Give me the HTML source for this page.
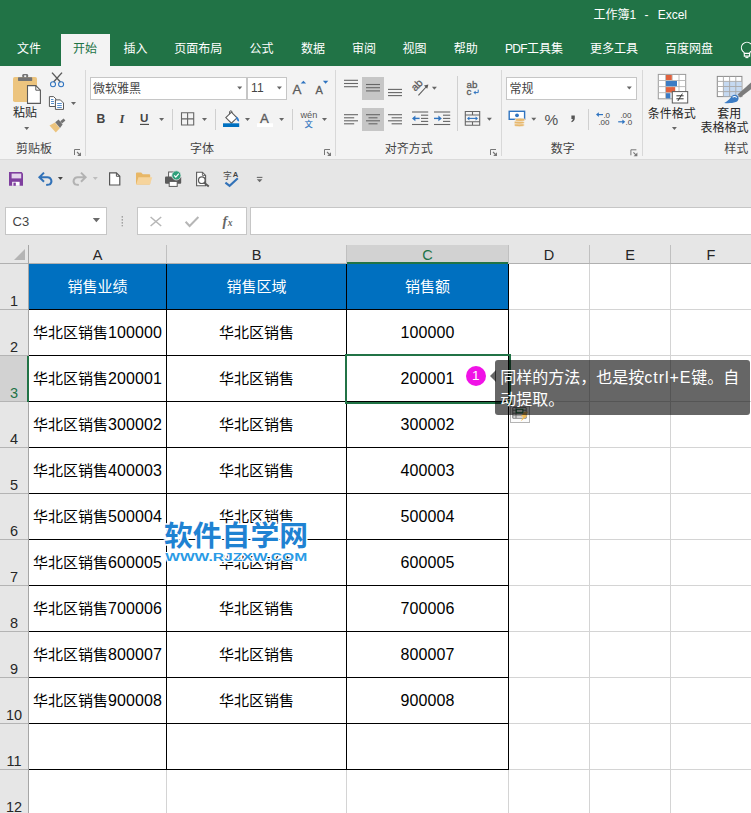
<!DOCTYPE html>
<html lang="zh-CN"><head><meta charset="utf-8"><title>Excel</title>
<style>
html,body{margin:0;padding:0}
body{width:751px;height:813px;overflow:hidden;position:relative;background:#fff;font-family:"Liberation Sans","Noto Sans CJK SC",sans-serif;color:#262626}
.b{position:absolute;box-sizing:border-box}
.t{position:absolute;white-space:nowrap}
.ic{position:absolute;overflow:visible}
.d{letter-spacing:.1px;font-size:16px}
.e{letter-spacing:.95px}

</style></head><body>
<div class="b " style="left:0px;top:0px;width:751px;height:66px;background:#217346;"></div>
<div class="b " style="left:61px;top:34px;width:49px;height:32px;background:#f3f3f3;"></div>
<div class="t w" style="left:593.4px;top:5.84px;font-size:12px;line-height:19px;color:#fff;">工作簿1</div>
<div class="t " style="left:644.5px;top:5.84px;font-size:12px;line-height:19px;color:#fff;">-</div>
<div class="t " style="left:657.7px;top:5.84px;font-size:12px;line-height:19px;color:#fff;">Excel</div>
<div class="t w" style="left:17px;top:40.04px;font-size:12px;line-height:19px;color:#fff;">文件</div>
<div class="t w" style="left:73px;top:40.04px;font-size:12px;line-height:19px;color:#217346;">开始</div>
<div class="t w" style="left:123.5px;top:40.04px;font-size:12px;line-height:19px;color:#fff;">插入</div>
<div class="t w" style="left:174.2px;top:40.04px;font-size:12px;line-height:19px;color:#fff;">页面布局</div>
<div class="t w" style="left:249.5px;top:40.04px;font-size:12px;line-height:19px;color:#fff;">公式</div>
<div class="t w" style="left:301px;top:40.04px;font-size:12px;line-height:19px;color:#fff;">数据</div>
<div class="t w" style="left:352px;top:40.04px;font-size:12px;line-height:19px;color:#fff;">审阅</div>
<div class="t w" style="left:402.5px;top:40.04px;font-size:12px;line-height:19px;color:#fff;">视图</div>
<div class="t w" style="left:453.7px;top:40.04px;font-size:12px;line-height:19px;color:#fff;">帮助</div>
<div class="t w" style="left:505px;top:40.04px;font-size:12px;line-height:19px;color:#fff;"><span style="letter-spacing:-.7px">PDF</span>工具集</div>
<div class="t w" style="left:590px;top:40.04px;font-size:12px;line-height:19px;color:#fff;">更多工具</div>
<div class="t w" style="left:665px;top:40.04px;font-size:12px;line-height:19px;color:#fff;">百度网盘</div>
<div class="b " style="left:0px;top:66px;width:751px;height:94px;background:#f3f3f3;"></div>
<div class="b " style="left:0px;top:159px;width:751px;height:1px;background:#dadada;"></div>
<div class="b " style="left:85px;top:70px;width:1px;height:86px;background:#d8d8d8;"></div>
<div class="b " style="left:335px;top:70px;width:1px;height:86px;background:#d8d8d8;"></div>
<div class="b " style="left:501px;top:70px;width:1px;height:86px;background:#d8d8d8;"></div>
<div class="b " style="left:642px;top:70px;width:1px;height:86px;background:#d8d8d8;"></div>
<div class="b " style="left:172px;top:109px;width:1px;height:21px;background:#d0d0d0;"></div>
<div class="b " style="left:215px;top:109px;width:1px;height:21px;background:#d0d0d0;"></div>
<div class="b " style="left:292px;top:109px;width:1px;height:21px;background:#d0d0d0;"></div>
<div class="b " style="left:588px;top:109px;width:1px;height:21px;background:#d0d0d0;"></div>
<div class="b " style="left:457px;top:76px;width:1px;height:55px;background:#d0d0d0;"></div>
<div class="t " style="left:16px;top:140.44px;font-size:12px;line-height:19px;color:#444;">剪贴板</div>
<div class="t " style="left:190px;top:140.44px;font-size:12px;line-height:19px;color:#444;">字体</div>
<div class="t " style="left:384.8px;top:140.44px;font-size:12px;line-height:19px;color:#444;">对齐方式</div>
<div class="t " style="left:550.8px;top:140.44px;font-size:12px;line-height:19px;color:#444;">数字</div>
<div class="t " style="left:724.2px;top:140.44px;font-size:12px;line-height:19px;color:#444;">样式</div>
<div class="t " style="left:13px;top:104.44px;font-size:12px;line-height:19px;color:#262626;">粘贴</div>
<div class="b " style="left:90px;top:77px;width:157px;height:23px;background:#fff;border:1px solid #c6c6c6"></div>
<div class="b " style="left:247px;top:77px;width:40px;height:23px;background:#fff;border:1px solid #c6c6c6"></div>
<div class="t " style="left:93px;top:79.54px;font-size:12px;line-height:19px;color:#444;">微软雅黑</div>
<div class="t " style="left:251px;top:79.34px;font-size:12px;line-height:19px;color:#444;letter-spacing:.3px">11</div>
<div class="b " style="left:506px;top:77px;width:131px;height:23px;background:#fff;border:1px solid #c6c6c6"></div>
<div class="t " style="left:509.4px;top:79.54px;font-size:12px;line-height:19px;color:#444;">常规</div>
<div class="t " style="left:647.8px;top:104.64px;font-size:12px;line-height:19px;color:#262626;">条件格式</div>
<div class="t " style="left:717.3px;top:104.64px;font-size:12px;line-height:19px;color:#262626;">套用</div>
<div class="t " style="left:700.5px;top:118.94px;font-size:12px;line-height:19px;color:#262626;">表格格式</div>
<div class="b " style="left:362px;top:77px;width:22px;height:23px;background:#c6c6c6;"></div>
<div class="b " style="left:362px;top:108px;width:22px;height:23px;background:#c6c6c6;"></div>
<div class="b " style="left:0px;top:160px;width:751px;height:104px;background:#e6e6e6;"></div>
<div class="b " style="left:5px;top:207px;width:102px;height:28px;background:#fff;border:1px solid #c6c6c6"></div>
<div class="t " style="left:12.5px;top:211.20px;font-size:13px;line-height:21px;color:#444;">C3</div>
<div class="b " style="left:137px;top:207px;width:110px;height:28px;background:#fff;border:1px solid #c6c6c6"></div>
<div class="b " style="left:250px;top:207px;width:510px;height:28px;background:#fff;border:1px solid #c6c6c6"></div>
<div class="b " style="left:0px;top:264px;width:751px;height:560px;background:#fff;"></div>
<div class="b " style="left:0px;top:264px;width:28px;height:560px;background:#e6e6e6;"></div>
<div class="b " style="left:347px;top:245px;width:161px;height:17px;background:#d2d2d2;"></div>
<div class="b " style="left:346px;top:262px;width:163px;height:2px;background:#217346;"></div>
<div class="b " style="left:28px;top:245px;width:1px;height:19px;background:#c0c0c0;"></div>
<div class="b " style="left:166px;top:245px;width:1px;height:19px;background:#c0c0c0;"></div>
<div class="b " style="left:346px;top:245px;width:1px;height:19px;background:#c0c0c0;"></div>
<div class="b " style="left:508px;top:245px;width:1px;height:19px;background:#c0c0c0;"></div>
<div class="b " style="left:589px;top:245px;width:1px;height:19px;background:#c0c0c0;"></div>
<div class="b " style="left:670px;top:245px;width:1px;height:19px;background:#c0c0c0;"></div>
<div class="b " style="left:0px;top:263px;width:346px;height:1px;background:#b0b0b0;"></div>
<div class="b " style="left:509px;top:263px;width:242px;height:1px;background:#b0b0b0;"></div>
<div class="t " style="left:-2.5px;width:200px;text-align:center;top:244.08px;font-size:14.5px;line-height:23px;color:#262626;">A</div>
<div class="t " style="left:156.5px;width:200px;text-align:center;top:244.08px;font-size:14.5px;line-height:23px;color:#262626;">B</div>
<div class="t " style="left:327.5px;width:200px;text-align:center;top:244.08px;font-size:14.5px;line-height:23px;color:#217346;">C</div>
<div class="t " style="left:449px;width:200px;text-align:center;top:244.08px;font-size:14.5px;line-height:23px;color:#262626;">D</div>
<div class="t " style="left:530px;width:200px;text-align:center;top:244.08px;font-size:14.5px;line-height:23px;color:#262626;">E</div>
<div class="t " style="left:611px;width:200px;text-align:center;top:244.08px;font-size:14.5px;line-height:23px;color:#262626;">F</div>
<svg class="ic" style="left:14px;top:249px" width="11" height="11" viewBox="0 0 11 11"><path d="M11 0V11H0Z" fill="#b4b4b4"/></svg>
<div class="b " style="left:0px;top:309px;width:28px;height:1px;background:#b4b4b4;"></div>
<div class="b " style="left:29px;top:309px;width:722px;height:1px;background:#d4d4d4;"></div>
<div class="b " style="left:0px;top:355px;width:28px;height:1px;background:#b4b4b4;"></div>
<div class="b " style="left:29px;top:355px;width:722px;height:1px;background:#d4d4d4;"></div>
<div class="b " style="left:0px;top:401px;width:28px;height:1px;background:#b4b4b4;"></div>
<div class="b " style="left:29px;top:401px;width:722px;height:1px;background:#d4d4d4;"></div>
<div class="b " style="left:0px;top:447px;width:28px;height:1px;background:#b4b4b4;"></div>
<div class="b " style="left:29px;top:447px;width:722px;height:1px;background:#d4d4d4;"></div>
<div class="b " style="left:0px;top:493px;width:28px;height:1px;background:#b4b4b4;"></div>
<div class="b " style="left:29px;top:493px;width:722px;height:1px;background:#d4d4d4;"></div>
<div class="b " style="left:0px;top:539px;width:28px;height:1px;background:#b4b4b4;"></div>
<div class="b " style="left:29px;top:539px;width:722px;height:1px;background:#d4d4d4;"></div>
<div class="b " style="left:0px;top:585px;width:28px;height:1px;background:#b4b4b4;"></div>
<div class="b " style="left:29px;top:585px;width:722px;height:1px;background:#d4d4d4;"></div>
<div class="b " style="left:0px;top:631px;width:28px;height:1px;background:#b4b4b4;"></div>
<div class="b " style="left:29px;top:631px;width:722px;height:1px;background:#d4d4d4;"></div>
<div class="b " style="left:0px;top:677px;width:28px;height:1px;background:#b4b4b4;"></div>
<div class="b " style="left:29px;top:677px;width:722px;height:1px;background:#d4d4d4;"></div>
<div class="b " style="left:0px;top:723px;width:28px;height:1px;background:#b4b4b4;"></div>
<div class="b " style="left:29px;top:723px;width:722px;height:1px;background:#d4d4d4;"></div>
<div class="b " style="left:0px;top:769px;width:28px;height:1px;background:#b4b4b4;"></div>
<div class="b " style="left:29px;top:769px;width:722px;height:1px;background:#d4d4d4;"></div>
<div class="b " style="left:0px;top:815px;width:28px;height:1px;background:#b4b4b4;"></div>
<div class="b " style="left:29px;top:815px;width:722px;height:1px;background:#d4d4d4;"></div>
<div class="b " style="left:166px;top:264px;width:1px;height:560px;background:#d4d4d4;"></div>
<div class="b " style="left:346px;top:264px;width:1px;height:560px;background:#d4d4d4;"></div>
<div class="b " style="left:508px;top:264px;width:1px;height:560px;background:#d4d4d4;"></div>
<div class="b " style="left:589px;top:264px;width:1px;height:560px;background:#d4d4d4;"></div>
<div class="b " style="left:670px;top:264px;width:1px;height:560px;background:#d4d4d4;"></div>
<div class="b " style="left:28px;top:245px;width:1px;height:580px;background:#a6a6a6;"></div>
<div class="b " style="left:0px;top:356px;width:28px;height:45px;background:#d2d2d2;"></div>
<div class="b " style="left:27px;top:356px;width:2px;height:46px;background:#217346;"></div>
<div class="t " style="left:-6px;width:40px;text-align:center;top:290.18px;font-size:14.5px;line-height:23px;color:#262626;">1</div>
<div class="t " style="left:-6px;width:40px;text-align:center;top:336.18px;font-size:14.5px;line-height:23px;color:#262626;">2</div>
<div class="t " style="left:-6px;width:40px;text-align:center;top:382.18px;font-size:14.5px;line-height:23px;color:#217346;">3</div>
<div class="t " style="left:-6px;width:40px;text-align:center;top:428.18px;font-size:14.5px;line-height:23px;color:#262626;">4</div>
<div class="t " style="left:-6px;width:40px;text-align:center;top:474.18px;font-size:14.5px;line-height:23px;color:#262626;">5</div>
<div class="t " style="left:-6px;width:40px;text-align:center;top:520.18px;font-size:14.5px;line-height:23px;color:#262626;">6</div>
<div class="t " style="left:-6px;width:40px;text-align:center;top:566.18px;font-size:14.5px;line-height:23px;color:#262626;">7</div>
<div class="t " style="left:-6px;width:40px;text-align:center;top:612.18px;font-size:14.5px;line-height:23px;color:#262626;">8</div>
<div class="t " style="left:-6px;width:40px;text-align:center;top:658.18px;font-size:14.5px;line-height:23px;color:#262626;">9</div>
<div class="t " style="left:-6px;width:40px;text-align:center;top:704.18px;font-size:14.5px;line-height:23px;color:#262626;">10</div>
<div class="t " style="left:-6px;width:40px;text-align:center;top:750.18px;font-size:14.5px;line-height:23px;color:#262626;">11</div>
<div class="t " style="left:-6px;width:40px;text-align:center;top:796.18px;font-size:14.5px;line-height:23px;color:#262626;">12</div>
<div class="b " style="left:29px;top:264px;width:479px;height:45px;background:#0070c0;"></div>
<div class="b " style="left:29px;top:309px;width:480px;height:1px;background:#000;"></div>
<div class="b " style="left:29px;top:355px;width:480px;height:1px;background:#000;"></div>
<div class="b " style="left:29px;top:401px;width:480px;height:1px;background:#000;"></div>
<div class="b " style="left:29px;top:447px;width:480px;height:1px;background:#000;"></div>
<div class="b " style="left:29px;top:493px;width:480px;height:1px;background:#000;"></div>
<div class="b " style="left:29px;top:539px;width:480px;height:1px;background:#000;"></div>
<div class="b " style="left:29px;top:585px;width:480px;height:1px;background:#000;"></div>
<div class="b " style="left:29px;top:631px;width:480px;height:1px;background:#000;"></div>
<div class="b " style="left:29px;top:677px;width:480px;height:1px;background:#000;"></div>
<div class="b " style="left:29px;top:723px;width:480px;height:1px;background:#000;"></div>
<div class="b " style="left:29px;top:769px;width:480px;height:1px;background:#000;"></div>
<div class="b " style="left:166px;top:264px;width:1px;height:506px;background:#000;"></div>
<div class="b " style="left:346px;top:264px;width:1px;height:506px;background:#000;"></div>
<div class="b " style="left:508px;top:264px;width:1px;height:506px;background:#000;"></div>
<div class="t " style="left:-12.5px;width:220px;text-align:center;top:274.90px;font-size:15px;line-height:24px;color:#fff;">销售业绩</div>
<div class="t " style="left:146.5px;width:220px;text-align:center;top:274.90px;font-size:15px;line-height:24px;color:#fff;">销售区域</div>
<div class="t " style="left:317.5px;width:220px;text-align:center;top:274.90px;font-size:15px;line-height:24px;color:#fff;">销售额</div>
<div class="t " style="left:-12.5px;width:220px;text-align:center;top:320.90px;font-size:15px;line-height:24px;color:#000;">华北区销售<span class="d">100000</span></div>
<div class="t " style="left:146.5px;width:220px;text-align:center;top:320.90px;font-size:15px;line-height:24px;color:#000;">华北区销售</div>
<div class="t " style="left:317.5px;width:220px;text-align:center;top:320.90px;font-size:15px;line-height:24px;color:#000;"><span class="d">100000</span></div>
<div class="t " style="left:-12.5px;width:220px;text-align:center;top:366.90px;font-size:15px;line-height:24px;color:#000;">华北区销售<span class="d">200001</span></div>
<div class="t " style="left:146.5px;width:220px;text-align:center;top:366.90px;font-size:15px;line-height:24px;color:#000;">华北区销售</div>
<div class="t " style="left:317.5px;width:220px;text-align:center;top:366.90px;font-size:15px;line-height:24px;color:#000;"><span class="d">200001</span></div>
<div class="t " style="left:-12.5px;width:220px;text-align:center;top:412.90px;font-size:15px;line-height:24px;color:#000;">华北区销售<span class="d">300002</span></div>
<div class="t " style="left:146.5px;width:220px;text-align:center;top:412.90px;font-size:15px;line-height:24px;color:#000;">华北区销售</div>
<div class="t " style="left:317.5px;width:220px;text-align:center;top:412.90px;font-size:15px;line-height:24px;color:#000;"><span class="d">300002</span></div>
<div class="t " style="left:-12.5px;width:220px;text-align:center;top:458.90px;font-size:15px;line-height:24px;color:#000;">华北区销售<span class="d">400003</span></div>
<div class="t " style="left:146.5px;width:220px;text-align:center;top:458.90px;font-size:15px;line-height:24px;color:#000;">华北区销售</div>
<div class="t " style="left:317.5px;width:220px;text-align:center;top:458.90px;font-size:15px;line-height:24px;color:#000;"><span class="d">400003</span></div>
<div class="t " style="left:-12.5px;width:220px;text-align:center;top:504.90px;font-size:15px;line-height:24px;color:#000;">华北区销售<span class="d">500004</span></div>
<div class="t " style="left:146.5px;width:220px;text-align:center;top:504.90px;font-size:15px;line-height:24px;color:#000;">华北区销售</div>
<div class="t " style="left:317.5px;width:220px;text-align:center;top:504.90px;font-size:15px;line-height:24px;color:#000;"><span class="d">500004</span></div>
<div class="t " style="left:-12.5px;width:220px;text-align:center;top:550.90px;font-size:15px;line-height:24px;color:#000;">华北区销售<span class="d">600005</span></div>
<div class="t " style="left:146.5px;width:220px;text-align:center;top:550.90px;font-size:15px;line-height:24px;color:#000;">华北区销售</div>
<div class="t " style="left:317.5px;width:220px;text-align:center;top:550.90px;font-size:15px;line-height:24px;color:#000;"><span class="d">600005</span></div>
<div class="t " style="left:-12.5px;width:220px;text-align:center;top:596.90px;font-size:15px;line-height:24px;color:#000;">华北区销售<span class="d">700006</span></div>
<div class="t " style="left:146.5px;width:220px;text-align:center;top:596.90px;font-size:15px;line-height:24px;color:#000;">华北区销售</div>
<div class="t " style="left:317.5px;width:220px;text-align:center;top:596.90px;font-size:15px;line-height:24px;color:#000;"><span class="d">700006</span></div>
<div class="t " style="left:-12.5px;width:220px;text-align:center;top:642.90px;font-size:15px;line-height:24px;color:#000;">华北区销售<span class="d">800007</span></div>
<div class="t " style="left:146.5px;width:220px;text-align:center;top:642.90px;font-size:15px;line-height:24px;color:#000;">华北区销售</div>
<div class="t " style="left:317.5px;width:220px;text-align:center;top:642.90px;font-size:15px;line-height:24px;color:#000;"><span class="d">800007</span></div>
<div class="t " style="left:-12.5px;width:220px;text-align:center;top:688.90px;font-size:15px;line-height:24px;color:#000;">华北区销售<span class="d">900008</span></div>
<div class="t " style="left:146.5px;width:220px;text-align:center;top:688.90px;font-size:15px;line-height:24px;color:#000;">华北区销售</div>
<div class="t " style="left:317.5px;width:220px;text-align:center;top:688.90px;font-size:15px;line-height:24px;color:#000;"><span class="d">900008</span></div>
<div class="b " style="left:345px;top:354px;width:166px;height:50px;border:2px solid #217346"></div>
<div class="b " style="left:507px;top:400px;width:5px;height:5px;background:#217346;border:1px solid #fff;box-sizing:content-box;left:506px;top:399px"></div>
<svg class="ic" style="left:0;top:0" width="751" height="813" viewBox="0 0 751 813" font-family="Liberation Sans, sans-serif" aria-hidden="true"><path d="M744.300 53.400c0-1-.800-1.500-1.700-2.300a5.500 5.500 0 1 1 8.700 0c-.900.800-1.700 1.300-1.700 2.300" fill="none" stroke="#fff" stroke-width="1.100"/><path d="M744.300 53.400h5.300v2.700h-5.300z" fill="none" stroke="#fff" stroke-width="1.100"/><path d="M745.400 57.600h3" stroke="#fff" stroke-width="1.100"/><rect x="13" y="77" width="24" height="25" rx="1.8" fill="#ecc47e"/><path d="M22.3 77.500v-2.200a1.400 1.400 0 0 1 1.400-1.400h3a1.400 1.400 0 0 1 1.400 1.400v2.200z" fill="#737373"/><rect x="18" y="77.3" width="14.2" height="3.6" rx=".6" fill="#737373"/><rect x="24.2" y="75.3" width="2" height="1.8" fill="#f3f3f3"/><path d="M27.500 85.600h8.300l4.600 4.600v13.200h-12.900z" fill="#fff" stroke="#5a5a5a" stroke-width="1.100"/><path d="M35.800 85.600v4.600h4.600" fill="none" stroke="#5a5a5a" stroke-width="1"/><path d="M24.200 126.900h5l-2.500 3z" fill="#666"/><path d="M52 72.600L60.400 82M62 72.600L53.600 82" stroke="#5a5a5a" stroke-width="1.400" fill="none"/><circle cx="53" cy="84.3" r="2.5" fill="none" stroke="#2f74c0" stroke-width="1.05"/><circle cx="61.1" cy="84.3" r="2.5" fill="none" stroke="#2f74c0" stroke-width="1.05"/><path d="M49.400 96.600h4.200l2.300 2.300v7.600h-6.500z" fill="#fff" stroke="#5a5a5a" stroke-width="1"/><path d="M55.400 99.900h5l3.100 3.100v6.400h-8.100z" fill="#fff" stroke="#5a5a5a" stroke-width="1"/><path d="M51 99.500h2.400M51 101.500h3M51 103.500h3M57.200 103.500h4.600M57.200 105.500h4.600M57.200 107.500h4.600" stroke="#2f74c0" stroke-width=".8"/><path d="M71 101.900h5l-2.500 3z" fill="#666"/><path d="M49.500 125.400L55 122.600L59.800 128.200L55.800 132.600Z" fill="#ecc47e"/><path d="M55.200 122.200L58.600 119.600L62.600 124.400L60 128Z" fill="#737373"/><path d="M60.200 121.200L63.600 118.600L65.400 120.600L62 123.400Z" fill="#737373"/><path d="M80 149.500H74.500V155" fill="none" stroke="#777" stroke-width="1"/><path d="M77 152L80 155" stroke="#777" stroke-width="1.100"/><path d="M81 152.200V156H77.200Z" fill="#777"/><path d="M237.200 86.600h5l-2.500 3z" fill="#666"/><path d="M276.900 86.600h5l-2.500 3z" fill="#666"/><text x="292.6" y="94.1" font-size="13.4" fill="#5a5a5a" stroke="#5a5a5a" stroke-width=".3">A</text><path d="M300.700 83.600h5.400l-2.700-2.900z" fill="#2f74c0"/><text x="315.6" y="94.1" font-size="11" fill="#5a5a5a" stroke="#5a5a5a" stroke-width=".3">A</text><path d="M322.900 80.800h5.400l-2.700 2.900z" fill="#2f74c0"/><text x="96.4" y="122.6" font-size="12.2" font-weight="bold" fill="#444">B</text><text x="119.4" y="122.6" font-size="12.6" font-weight="bold" font-style="italic" font-family="Liberation Serif, serif" fill="#444">I</text><text x="140" y="122.4" font-size="11.6" font-weight="bold" fill="#444">U</text><path d="M140 124.400H149" stroke="#444" stroke-width="1.100"/><path d="M159.100 117.900h5l-2.500 3z" fill="#666"/><path d="M181.500 112.800h12.200v12.200h-12.200zM187.600 112.800v12.200M181.500 118.900h12.200" fill="none" stroke="#666" stroke-width="1.100"/><path d="M202 117.900h5l-2.500 3z" fill="#666"/><path d="M225.800 117.600L231.400 112.200L237 117.800L231.400 123.200Z" fill="#fff" stroke="#5a5a5a" stroke-width="1.100"/><path d="M229.600 114.200v-2.200a1.200 1.200 0 0 1 2.400 0v1" fill="none" stroke="#5a5a5a" stroke-width="1"/><path d="M236.400 116.400c1.800 1 2.900 2.800 2.700 5.200c-1.400-.2-2.500-1.400-2.900-3.400z" fill="#2f7fd6"/><rect x="223" y="123.3" width="16.2" height="3.7" fill="#0070c0"/><path d="M245 117.900h5l-2.500 3z" fill="#666"/><text x="260" y="122.9" font-size="13.2" fill="#5a5a5a" stroke="#5a5a5a" stroke-width=".35">A</text><rect x="257" y="123.3" width="16" height="3.7" fill="#fff"/><path d="M279.100 117.900h5l-2.500 3z" fill="#666"/><text x="300.4" y="118.4" font-size="9.2" fill="#555">wén</text><text x="304.7" y="126.5" font-size="7.8" font-family="Liberation Sans, Noto Sans CJK SC, sans-serif" fill="#2f74c0" stroke="#2f74c0" stroke-width=".23">文</text><path d="M322 117.900h5l-2.500 3z" fill="#666"/><path d="M330 149.500H324.500V155" fill="none" stroke="#777" stroke-width="1"/><path d="M327 152L330 155" stroke="#777" stroke-width="1.100"/><path d="M331 152.200V156H327.200Z" fill="#777"/><path d="M344 80.300H358" stroke="#666" stroke-width="1.100"/><path d="M344 83.500H358" stroke="#666" stroke-width="1.100"/><path d="M344 86.700H358" stroke="#666" stroke-width="1.100"/><path d="M366 84.500H380" stroke="#666" stroke-width="1.100"/><path d="M366 87.700H380" stroke="#666" stroke-width="1.100"/><path d="M366 90.900H380" stroke="#666" stroke-width="1.100"/><path d="M388 89.400H402" stroke="#666" stroke-width="1.100"/><path d="M388 92.600H402" stroke="#666" stroke-width="1.100"/><path d="M388 95.600H402" stroke="#666" stroke-width="1.100"/><path d="M344 114.700H358" stroke="#666" stroke-width="1.100"/><path d="M366 114.700H380" stroke="#666" stroke-width="1.100"/><path d="M388 114.700H402" stroke="#666" stroke-width="1.100"/><path d="M344 117.800H354.200" stroke="#666" stroke-width="1.100"/><path d="M368.500 117.800H377.500" stroke="#666" stroke-width="1.100"/><path d="M391.600 117.800H402" stroke="#666" stroke-width="1.100"/><path d="M344 120.800H358" stroke="#666" stroke-width="1.100"/><path d="M366 120.800H380" stroke="#666" stroke-width="1.100"/><path d="M388 120.800H402" stroke="#666" stroke-width="1.100"/><path d="M344 123.800H354.200" stroke="#666" stroke-width="1.100"/><path d="M368.500 123.800H377.500" stroke="#666" stroke-width="1.100"/><path d="M391.600 123.800H402" stroke="#666" stroke-width="1.100"/><text transform="translate(415.2 91.8) rotate(-45)" font-size="10.6" fill="#5a5a5a" stroke="#5a5a5a" stroke-width=".25">ab</text><path d="M418.400 95.400L427 86" stroke="#5a5a5a" stroke-width="1.100"/><path d="M428.400 84.400l-4.400 1.200l3.200 3.200z" fill="#5a5a5a"/><path d="M431.900 86.800h5l-2.500 3z" fill="#666"/><text x="466.6" y="88.4" font-size="9.8" fill="#5a5a5a" stroke="#5a5a5a" stroke-width=".3">ab</text><text x="466.6" y="95" font-size="9.8" fill="#5a5a5a" stroke="#5a5a5a" stroke-width=".3">c</text><path d="M478.200 89.600v3h-3.400" fill="none" stroke="#2f74c0" stroke-width="1"/><path d="M473.400 92.600l2.200-1.900v3.800z" fill="#2f74c0"/><path d="M412 112H428.200" stroke="#666" stroke-width="1.100"/><path d="M412 124.500H428.200" stroke="#666" stroke-width="1.100"/><path d="M421 115.200H428.200" stroke="#666" stroke-width="1.100"/><path d="M421 118.400H428.200" stroke="#666" stroke-width="1.100"/><path d="M421 121.400H428.200" stroke="#666" stroke-width="1.100"/><path d="M419.600 118.400H413.800" stroke="#2f74c0" stroke-width="1.400"/><path d="M412 118.400l3.400-2.900v5.800z" fill="#2f74c0"/><path d="M434 112H450.200" stroke="#666" stroke-width="1.100"/><path d="M434 124.500H450.200" stroke="#666" stroke-width="1.100"/><path d="M443 115.200H450.200" stroke="#666" stroke-width="1.100"/><path d="M443 118.400H450.200" stroke="#666" stroke-width="1.100"/><path d="M443 121.400H450.200" stroke="#666" stroke-width="1.100"/><path d="M434 118.400H439.800" stroke="#2f74c0" stroke-width="1.400"/><path d="M441.800 118.400l-3.400-2.900v5.800z" fill="#2f74c0"/><path d="M465.300 111.500h14.400v13.800h-14.400zM465.300 115h14.400M465.300 121.800h14.400M472.500 111.500v3.500M472.500 121.800v3.500" fill="none" stroke="#666" stroke-width="1.100"/><path d="M468.600 118.400h7.800" stroke="#2f74c0" stroke-width="1.100"/><path d="M467 118.400l2.400-2v4zM478 118.400l-2.400-2v4z" fill="#2f74c0"/><path d="M486.900 117.800h5l-2.500 3z" fill="#666"/><path d="M496 149.500H490.500V155" fill="none" stroke="#777" stroke-width="1"/><path d="M493 152L496 155" stroke="#777" stroke-width="1.100"/><path d="M497 152.200V156H493.200Z" fill="#777"/><path d="M626.800 86.600h5l-2.500 3z" fill="#666"/><rect x="509.2" y="111.3" width="15.4" height="8" fill="#fff" stroke="#2f74c0" stroke-width="1.4"/><circle cx="517" cy="115.3" r="1.9" fill="#2f74c0"/><ellipse cx="519.2" cy="125" rx="5.2" ry="1.7" fill="#e8b86c" stroke="#f3f3f3" stroke-width=".6"/><ellipse cx="519.2" cy="122.4" rx="5.2" ry="1.7" fill="#e8b86c" stroke="#f3f3f3" stroke-width=".6"/><ellipse cx="520" cy="119.8" rx="5.2" ry="1.7" fill="#e8b86c" stroke="#f3f3f3" stroke-width=".6"/><path d="M531.300 117.700h5l-2.500 3z" fill="#666"/><text x="544.6" y="124.9" font-size="15.4" fill="#555">%</text><path d="M571.400 115.400h3.400v2.600c0 2-1 3.400-3 4.200l-.6-1c1-.5 1.500-1.200 1.600-2.200h-1.400z" fill="#555"/><path d="M603 114.600h-5" stroke="#2f74c0" stroke-width="1.200"/><path d="M596 114.600l2.800-2.400v4.800z" fill="#2f74c0"/><text x="603.4" y="118" font-size="8" fill="#444">.0</text><text x="598.4" y="125" font-size="8" fill="#444">.00</text><text x="620.4" y="118" font-size="8" fill="#444">.00</text><text x="625.6" y="125" font-size="8" fill="#444">.0</text><path d="M618.200 121.800h5" stroke="#2f74c0" stroke-width="1.200"/><path d="M625.200 121.800l-2.800-2.400v4.800z" fill="#2f74c0"/><path d="M636.400 149.800H630.900V155.300" fill="none" stroke="#777" stroke-width="1"/><path d="M633.400 152.300L636.400 155.300" stroke="#777" stroke-width="1.100"/><path d="M637.400 152.500V156.300H633.600Z" fill="#777"/><rect x="658.3" y="74.4" width="27.4" height="24.4" fill="#fff" stroke="#9a9a9a" stroke-width="1"/><path d="M665.600 74.400v24.400M672.200 74.400v24.400M679 74.400v24.400M658.300 80.500h27.400M658.300 86.600h27.400M658.300 92.700h27.400" stroke="#b4b4b4" stroke-width=".9"/><rect x="666" y="75" width="5.8" height="5" fill="#e0623e"/><rect x="666" y="81" width="11" height="5.2" fill="#3c7cc4"/><rect x="666" y="87.1" width="9.2" height="5.2" fill="#e0623e"/><rect x="666" y="93.2" width="4.4" height="5.2" fill="#3c7cc4"/><rect x="672.3" y="91.6" width="15.4" height="11.4" fill="#fff" stroke="#5a5a5a" stroke-width="1"/><path d="M676.400 95.800h7.200M676.400 98.800h7.200M682.400 93.600l-4.600 7.400" stroke="#333" stroke-width="1"/><path d="M671.900 126.900h5l-2.500 3z" fill="#666"/><rect x="717.3" y="76.4" width="24.6" height="20.2" fill="#fff" stroke="#8a8a8a" stroke-width="1"/><rect x="723.5" y="81.5" width="18" height="14.8" fill="#c5d9f1"/><path d="M723.400 76.400v20.200M729.600 76.400v20.200M735.800 76.400v20.200M717.300 81.400h24.600M717.300 86.500h24.600M717.300 91.600h24.600" stroke="#a8a8a8" stroke-width=".9"/><path d="M752 81.500L737.600 94.400L740.200 97.400L752 88.400Z" fill="#7c7c7c"/><path d="M724.200 103c3.600-1.600 6-4.400 7.600-7c2-1.800 5-1.400 6.200.4c1.400 2.200.2 4.800-2.200 5.600c-3.400 1.200-7.400 1.400-11.600 1z" fill="#3c7cc4"/><path d="M732.600 97.200c1.400-1 3.200-.8 4 .4" fill="none" stroke="#fff" stroke-width="1.100"/><path d="M9 172h12.600l1.400 1.400v12.400h-14z" fill="#7f3f9f"/><rect x="11.6" y="173.600" width="9.600" height="4.800" fill="#e4d4ec"/><rect x="12.2" y="181.800" width="7.400" height="4" fill="#fff"/><rect x="13.400" y="182.600" width="2.400" height="3.200" fill="#7f3f9f"/><g transform="translate(37.6 0)"><path d="M6.400 172.600L1.800 177.200L6.400 181.800M2.200 177.200H9.800a4 4 0 0 1 2.400 7.200L8.600 185" fill="none" stroke="#3272b8" stroke-width="2"/></g><path d="M57.900 176.900h5l-2.500 3z" fill="#444"/><g transform="translate(87.4 0) scale(-1 1)"><path d="M6.400 172.600L1.800 177.200L6.400 181.800M2.200 177.200H9.800a4 4 0 0 1 2.400 7.200L8.600 185" fill="none" stroke="#b2b2b2" stroke-width="2"/></g><path d="M92.800 176.900h5l-2.500 3z" fill="#bdbdbd"/><path d="M109.600 172.900h6.800l3.400 3.400v8.700h-10.200z" fill="#fff" stroke="#555" stroke-width="1.200"/><path d="M116.400 172.900v3.400h3.400" fill="none" stroke="#555" stroke-width="1"/><path d="M136 173.400a1 1 0 0 1 1-1h4.200l1.600 1.800h6.400a1 1 0 0 1 1 1v8.400a1 1 0 0 1-1 1h-12.200a1 1 0 0 1-1-1z" fill="#e8b766"/><path d="M138.400 177.200h13.800l-2.200 7.400h-13.800z" fill="#f6d49c"/><rect x="168.600" y="172" width="8" height="6" fill="#fff" stroke="#5a5a5a" stroke-width="1"/><rect x="165" y="176.600" width="16.200" height="7.200" rx="1" fill="#5a5a5a"/><rect x="169.200" y="181.400" width="8" height="5" fill="#fff" stroke="#5a5a5a" stroke-width="1"/><circle cx="176.400" cy="175.400" r="4.600" fill="#2f9f7a" stroke="#e6e6e6" stroke-width=".8"/><path d="M174.200 175.400l1.600 1.700l3-3.400" fill="none" stroke="#fff" stroke-width="1.200"/><path d="M196.600 172.200h5.800l3.200 3.200v10.400h-9z" fill="#fff" stroke="#5a5a5a" stroke-width="1.100"/><path d="M202.400 172.200v3.200h3.200" fill="none" stroke="#5a5a5a" stroke-width=".9"/><circle cx="201.800" cy="180.200" r="3.300" fill="#fff" stroke="#5a5a5a" stroke-width="1.200"/><path d="M204.200 182.800l4.600 3.800" stroke="#5a5a5a" stroke-width="1.900"/><text x="223" y="178.600" font-size="8.800" font-family="Liberation Sans, Noto Sans CJK SC, sans-serif" fill="#444">字</text><text x="232.800" y="177.100" font-size="7.600" font-weight="bold" fill="#444">A</text><path d="M225.400 182.600l4.200 3.200l8.200-7.600" fill="none" stroke="#3272b8" stroke-width="2.100"/><path d="M256.800 177.400h5.600" stroke="#6a6a6a" stroke-width="1.100"/><path d="M256.800 179.200h5.600l-2.800 3z" fill="#6a6a6a"/><path d="M92.800 218.100h7.200l-3.600 4.200z" fill="#6a6a6a"/><path d="M122.300 216.200v10" stroke="#8c8c8c" stroke-width="1.400" stroke-dasharray="1.400 1.600"/><path d="M150.600 217l10.600 9M161.200 217l-10.600 9" stroke="#b6b6b6" stroke-width="1.500"/><path d="M185.600 221.800l4 4.200l8.800-9" fill="none" stroke="#b6b6b6" stroke-width="2"/><text x="222.600" y="225.600" font-size="14" font-style="italic" font-weight="bold" font-family="Liberation Serif, serif" fill="#666">f</text><text x="227.800" y="226.400" font-size="9.500" font-style="italic" font-weight="bold" font-family="Liberation Serif, serif" fill="#666">x</text><rect x="510.500" y="406.500" width="19" height="16" fill="#fcfcfc" stroke="#b4b4b4" stroke-width="1"/><path d="M512.800 407.600h13.400v10.600h-13.400zM512.800 410.200h13.400M512.800 413.200h13.400M512.800 415.800h13.400M516 407.600v10.600" fill="none" stroke="#6a6a6a" stroke-width=".9"/><rect x="516.300" y="409.300" width="6.600" height="3.400" fill="#fff" stroke="#217346" stroke-width="1.100"/><path d="M524.200 411.800h3.800l-2.600 3.600h2.400l-7 5.800l2.600-4.800h-2.400z" fill="#f2bc55"/></svg>
<svg class="ic" style="left:164px;top:521px" width="144" height="29" viewBox="0 0 5000 1000"><text x="0" y="880" font-size="1000" font-weight="bold" textLength="5000" lengthAdjust="spacingAndGlyphs" font-family="Liberation Sans, Noto Sans CJK SC, sans-serif" fill="#1f82d2" stroke="#fff" stroke-width="110" stroke-linejoin="round" paint-order="stroke">软件自学网</text></svg>
<svg class="ic" style="left:160px;top:550px" width="152" height="16" viewBox="0 0 152 16"><text x="5.2" y="11.1" textLength="142" lengthAdjust="spacingAndGlyphs" font-family="Liberation Sans, sans-serif" font-weight="bold" font-size="10.5" fill="#2a9be6" stroke="#fff" stroke-width="2" stroke-linejoin="round" paint-order="stroke">WWW.RJZXW.COM</text></svg>
<div class="b " style="left:495px;top:359.5px;width:255px;height:55px;background:rgba(0,0,0,.6);border-radius:3px"></div>
<svg class="ic" style="left:490px;top:370px" width="6" height="12" viewBox="0 0 6 12"><path d="M6 0V12L0 6Z" fill="rgba(0,0,0,.6)"/></svg>
<div class="t " style="left:500.3px;top:365.16px;font-size:16px;line-height:26px;color:#fff;">同样的方法，也是按<span class="e">ctrl+E</span>键。自</div>
<div class="t " style="left:500.3px;top:386.76px;font-size:16px;line-height:26px;color:#fff;">动提取。</div>
<div class="b " style="left:466px;top:365.8px;width:20px;height:20px;background:#f012e6;border-radius:50%"></div>
<div class="t " style="left:465.8px;width:20px;text-align:center;top:364.72px;font-size:13.5px;line-height:22px;color:#fff;">1</div>
</body></html>
